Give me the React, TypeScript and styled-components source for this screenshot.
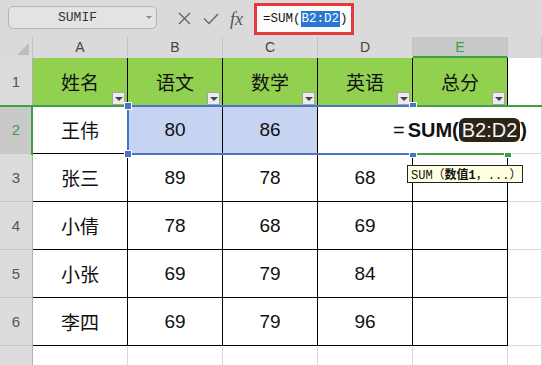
import styled, { createGlobalStyle } from 'styled-components';

const GREEN = '#3f9f46';
const BLUE = '#4a74cc';

const GlobalStyle = createGlobalStyle`
  html, body {
    margin: 0;
    padding: 0;
    background: #fff;
  }
  body {
    font-family: 'Liberation Sans', 'Noto Sans CJK SC', sans-serif;
  }
`;

const Page = styled.div`
  width: 542px;
  height: 365px;
  overflow: hidden;
  background: #fff;
`;

const Toolbar = styled.div`
  height: 37px;
  box-sizing: border-box;
  display: flex;
  align-items: center;
  padding-left: 8px;
  background: #dadada;
`;

const NameBox = styled.div`
  width: 149px;
  height: 23px;
  margin-bottom: 3px;
  box-sizing: border-box;
  display: flex;
  align-items: center;
  padding: 0 4px 0 0;
  border: 1px solid #b4b4b4;
  border-radius: 5px;
  background: #e3e3e3;
`;

const NameText = styled.span`
  flex: 1;
  text-align: center;
  font-family: 'Liberation Mono', monospace;
  font-size: 13px;
  color: #333;
`;

const DropArrow = styled.span`
  width: 0;
  height: 0;
  border-left: 3px solid transparent;
  border-right: 3px solid transparent;
  border-top: 3px solid #8a8a8a;
`;

const ToolIcon = styled.svg<{ $gap: number }>`
  margin-left: ${(p) => p.$gap}px;
  flex-shrink: 0;
`;

const FxLabel = styled.span`
  margin-left: 11px;
  font-family: 'Liberation Serif', serif;
  font-style: italic;
  font-size: 18px;
  color: #555;
  line-height: 1;
`;

const FormulaField = styled.div`
  margin-left: 11px;
  width: 100px;
  height: 32px;
  box-sizing: border-box;
  display: flex;
  align-items: center;
  padding-left: 6px;
  border: 3px solid #e5393b;
  background: #fdfdfd;
  font-family: 'Liberation Mono', monospace;
  font-size: 12.5px;
  color: #111;
  white-space: nowrap;
`;

const FormulaRef = styled.span`
  background: #2a78d6;
  color: #fff;
  padding: 1px 1px;
`;

const Sheet = styled.div`
  position: relative;
  display: grid;
  grid-template-columns: 33px repeat(5, 95px) 1fr;
  grid-template-rows: 21px repeat(6, 48px) 48px;
`;

const Corner = styled.div`
  position: relative;
  background: #dadada;
  border-right: 1px solid #c4c4c4;
  &::after {
    content: '';
    position: absolute;
    right: 3px;
    bottom: 3px;
    border-left: 12px solid transparent;
    border-bottom: 12px solid #bcbcbc;
  }
`;

const ColHead = styled.div<{ $active?: boolean }>`
  box-sizing: border-box;
  display: flex;
  align-items: center;
  justify-content: center;
  background: ${(p) => (p.$active ? '#c8c8c8' : '#dadada')};
  border-right: 1px solid #c4c4c4;
  border-bottom: 2px solid ${(p) => (p.$active ? GREEN : '#dadada')};
  font-size: 14px;
  color: ${(p) => (p.$active ? GREEN : '#444')};
`;

const RowHead = styled.div<{ $active?: boolean }>`
  box-sizing: border-box;
  display: flex;
  align-items: center;
  justify-content: center;
  background: ${(p) => (p.$active ? '#c9c9c9' : '#dcdcdc')};
  border-right: 1px solid #b0b0b0;
  border-bottom: 1px solid #c6c6c6;
  font-size: 15px;
  color: ${(p) => (p.$active ? GREEN : '#555')};
`;

type CellKind = 'head' | 'data' | 'blank';

const Cell = styled.div<{ $kind: CellKind; $picked?: boolean }>`
  position: relative;
  box-sizing: border-box;
  display: flex;
  align-items: center;
  justify-content: center;
  font-size: 19px;
  color: #111;
  border-right: 1px solid ${(p) => (p.$kind === 'blank' ? '#d8d8d8' : '#000')};
  border-bottom: 1px solid ${(p) => (p.$kind === 'blank' ? '#d8d8d8' : '#000')};
  background: ${(p) =>
    p.$kind === 'head' ? '#92d050' : p.$picked ? '#c6d3f1' : '#fff'};
`;

const FilterBtn = styled.span`
  position: absolute;
  right: 2px;
  bottom: 0;
  width: 13px;
  height: 13px;
  box-sizing: border-box;
  display: flex;
  align-items: center;
  justify-content: center;
  border: 1px solid #a3a3a3;
  background: #ececec;
  &::after {
    content: '';
    border-left: 4px solid transparent;
    border-right: 4px solid transparent;
    border-top: 4px solid #444;
  }
`;

const RowMark = styled.div`
  position: absolute;
  left: 0;
  right: 0;
  top: 68px;
  height: 2px;
  background: ${GREEN};
`;

const RowSide = styled.div`
  position: absolute;
  left: 31px;
  top: 68px;
  width: 2px;
  height: 50px;
  background: ${GREEN};
`;

const Frame = styled.div<{ $color: string }>`
  position: absolute;
  box-sizing: border-box;
  border: 2px solid ${(p) => p.$color};
`;

const Handle = styled.span<{ $color: string }>`
  position: absolute;
  width: 6px;
  height: 6px;
  box-sizing: border-box;
  background: ${(p) => p.$color};
  outline: 1px solid #fff;
  transform: translate(-50%, -50%);
`;

const Editor = styled.div`
  position: absolute;
  left: 319px;
  top: 70px;
  width: 212px;
  height: 46px;
  box-sizing: border-box;
  display: flex;
  align-items: center;
  justify-content: flex-end;
  padding-right: 4px;
  background: #fff;
  font-size: 20px;
  color: #111;
  white-space: nowrap;
`;

const EditorEq = styled.span`
  margin-right: 3px;
`;

const EditorBold = styled.span`
  font-weight: bold;
`;

const EditorRef = styled.span`
  display: inline-flex;
  align-items: center;
  height: 24px;
  padding: 0 3px;
  border-radius: 6px;
  background: #2b2417;
  color: #f4f4f4;
`;

const Tip = styled.div`
  position: absolute;
  left: 407px;
  top: 128px;
  width: 116px;
  height: 18px;
  box-sizing: border-box;
  display: flex;
  align-items: center;
  padding-left: 3px;
  border: 1px solid #222;
  background: #ffffe1;
  font-family: 'Liberation Mono', 'Noto Sans CJK SC', monospace;
  font-size: 12px;
  color: #111;
  white-space: nowrap;
  z-index: 2;
`;

const columns = ['A', 'B', 'C', 'D', 'E'];
const heads = ['姓名', '语文', '数学', '英语', '总分'];
const rows: string[][] = [
  ['王伟', '80', '86', '', ''],
  ['张三', '89', '78', '68', ''],
  ['小倩', '78', '68', '69', ''],
  ['小张', '69', '79', '84', ''],
  ['李四', '69', '79', '96', ''],
];

// range B2:D2 corners, in sheet coordinates
const rangeCorners = [
  [128, 69],
  [413, 69],
  [128, 117],
  [413, 117],
];

export default function App() {
  return (
    <Page>
      <GlobalStyle />
      <Toolbar>
        <NameBox>
          <NameText>SUMIF</NameText>
          <DropArrow />
        </NameBox>
        <ToolIcon $gap={21} width="13" height="13" viewBox="0 0 13 13">
          <path d="M1 1L12 12M12 1L1 12" stroke="#666" strokeWidth="1.4" fill="none" />
        </ToolIcon>
        <ToolIcon $gap={12} width="16" height="12" viewBox="0 0 16 12">
          <path d="M1 5.5L6 10.5L15 1" stroke="#666" strokeWidth="1.4" fill="none" />
        </ToolIcon>
        <FxLabel>fx</FxLabel>
        <FormulaField>
          =SUM(<FormulaRef>B2:D2</FormulaRef>)
        </FormulaField>
      </Toolbar>

      <Sheet>
        <Corner />
        {columns.map((c) => (
          <ColHead key={c} $active={c === 'E'}>
            {c}
          </ColHead>
        ))}
        <ColHead />

        <RowHead>1</RowHead>
        {heads.map((h) => (
          <Cell key={h} $kind="head">
            {h}
            <FilterBtn />
          </Cell>
        ))}
        <Cell $kind="blank" />

        {rows.map((r, i) => (
          <>
            <RowHead key={`h${i}`} $active={i === 0}>
              {i + 2}
            </RowHead>
            {r.map((v, j) => (
              <Cell key={`${i}-${j}`} $kind="data" $picked={i === 0 && (j === 1 || j === 2)}>
                {v}
              </Cell>
            ))}
            <Cell key={`f${i}`} $kind="blank" />
          </>
        ))}

        {/* row 7 is cut by the window edge, its number falls below it */}
        <RowHead />
        {columns.map((c) => (
          <Cell key={`7${c}`} $kind="blank" />
        ))}
        <Cell $kind="blank" />

        <RowMark />
        <RowSide />
        <Frame $color={GREEN} style={{ left: 412, top: 68, width: 97, height: 50 }} />
        <Frame $color={BLUE} style={{ left: 127, top: 68, width: 287, height: 50 }} />
        {rangeCorners.map(([x, y]) => (
          <Handle key={`${x}-${y}`} $color={BLUE} style={{ left: x, top: y }} />
        ))}
        <Handle $color={GREEN} style={{ left: 508, top: 117 }} />
        <Editor>
          <EditorEq>=</EditorEq>
          <EditorBold>SUM(</EditorBold>
          <EditorRef>B2:D2</EditorRef>
          <EditorBold>)</EditorBold>
        </Editor>
        <Tip>
          SUM（<b>数值1</b>，...）
        </Tip>
      </Sheet>
    </Page>
  );
}
